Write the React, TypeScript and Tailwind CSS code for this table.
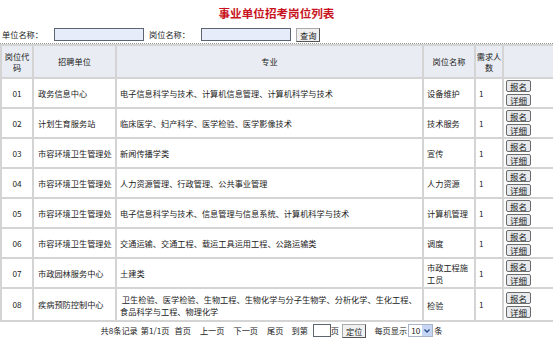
import React from "react";

const rows = [
  { code: "01", unit: "政务信息中心", major: "电子信息科学与技术、计算机信息管理、计算机科学与技术", post: "设备维护" },
  { code: "02", unit: "计划生育服务站", major: "临床医学、妇产科学、医学检验、医学影像技术", post: "技术服务" },
  { code: "03", unit: "市容环境卫生管理处", major: "新闻传播学类", post: "宣传" },
  { code: "04", unit: "市容环境卫生管理处", major: "人力资源管理、行政管理、公共事业管理", post: "人力资源" },
  { code: "05", unit: "市容环境卫生管理处", major: "电子信息科学与技术、信息管理与信息系统、计算机科学与技术", post: "计算机管理" },
  { code: "06", unit: "市容环境卫生管理处", major: "交通运输、交通工程、载运工具运用工程、公路运输类", post: "调度" },
  { code: "07", unit: "市政园林服务中心", major: "土建类", post: "市政工程施工员" },
  { code: "08", unit: "疾病预防控制中心", major: "\u00a0卫生检验、医学检验、生物工程、生物化学与分子生物学、分析化学、生化工程、食品科学与工程、物理化学", post: "检验" },
];

const SmallButton = ({ label }: { label: string }) => (
  <button className="block w-[25px] h-[12px] leading-[10px] border border-[#6b6b6b] rounded-[2px] bg-[#e8eaee] text-[8.5px] text-[#222]">
    {label}
  </button>
);

export default function App() {
  return (
    <div className="w-[553px] h-[348px] bg-white text-[#222] text-[8.2px] overflow-hidden" style={{ fontFamily: '"Noto Sans CJK SC", sans-serif' }}>
      {/* title */}
      <div className="h-[26px] flex items-center justify-center pt-[2px]">
        <h1 className="text-[11.6px] font-bold text-[#c8141e]">事业单位招考岗位列表</h1>
      </div>

      {/* search */}
      <div className="flex items-center h-[17px] pl-[2px]">
        <span className="w-[52px]">单位名称：</span>
        <input className="w-[90px] h-[13px] bg-[#e6ecfa] border border-[#5c6670]" />
        <span className="ml-[5px] w-[52px]">岗位名称：</span>
        <input className="w-[90px] h-[13px] bg-[#e6ecfa] border border-[#5c6670]" />
        <button className="ml-[5px] h-[14px] px-[3px] leading-[12px] bg-[#f0f0f0] border border-[#aaa] border-r-[#555] border-b-[#555]">查询</button>
      </div>
      <div className="border-b border-dotted border-[#999]" />

      {/* table */}
      <table className="w-[553px] table-fixed border-collapse">
        <colgroup>
          <col className="w-[32px]" />
          <col className="w-[83px]" />
          <col className="w-[307px]" />
          <col className="w-[52px]" />
          <col className="w-[28px]" />
          <col className="w-[51px]" />
        </colgroup>
        <thead>
          <tr className="h-[33px] bg-[#e9ecf3]">
            <th className="font-normal border-2 border-[#d4d4d4] leading-[11px] px-[2px]">岗位代码</th>
            <th className="font-normal border-2 border-[#d4d4d4]">招聘单位</th>
            <th className="font-normal border-2 border-[#d4d4d4]">专业</th>
            <th className="font-normal border-2 border-[#d4d4d4]">岗位名称</th>
            <th className="font-normal border-2 border-[#d4d4d4] leading-[11px]">需求人数</th>
            <th className="font-normal border-2 border-[#d4d4d4]"></th>
          </tr>
        </thead>
        <tbody>
          {rows.map((r, i) => (
            <tr key={r.code} className={i === rows.length - 1 ? "h-[33px]" : "h-[30px]"}>
              <td className="border-2 border-[#d4d4d4] text-center">{r.code}</td>
              <td className="border-2 border-[#d4d4d4] pl-[4px] whitespace-nowrap">{r.unit}</td>
              <td className="border-2 border-[#d4d4d4] pl-[3px] leading-[12px]">{r.major}</td>
              <td className="border-2 border-[#d4d4d4] pl-[3px] leading-[12px]">{r.post}</td>
              <td className="border-2 border-[#d4d4d4] pl-[3px]">1</td>
              <td className="border-2 border-[#d4d4d4] pl-[2px]">
                <div className="flex flex-col gap-[2px]">
                  <SmallButton label="报名" />
                  <SmallButton label="详细" />
                </div>
              </td>
            </tr>
          ))}
        </tbody>
      </table>

      {/* pager */}
      <div className="flex items-center justify-center h-[17px] pr-[10px]">
        <span>共8条记录</span>
        <span className="ml-[3px]">第1/1页</span>
        <span className="ml-[5px]">首页</span>
        <span className="ml-[9px]">上一页</span>
        <span className="ml-[9px]">下一页</span>
        <span className="ml-[9px]">尾页</span>
        <span className="ml-[8px]">到第</span>
        <input className="ml-[5px] w-[18px] h-[13px] border border-[#5c6670] bg-white" />
        <span>页</span>
        <button className="ml-[3px] h-[14px] px-[3px] leading-[12px] bg-[#f0f0f0] border border-[#aaa] border-r-[#555] border-b-[#555]">定位</button>
        <span className="ml-[8px]">每页显示</span>
        <div className="ml-[1px] flex items-center h-[13px] border border-[#aab4c8] bg-white">
          <span className="px-[2px]">10</span>
          <span className="w-[10px] h-[11px] bg-[#c6d6f4] flex items-center justify-center">
            <svg width="6" height="4" viewBox="0 0 6 4"><path d="M0.5 0.5 L3 3 L5.5 0.5" stroke="#2b4a8a" strokeWidth="1.3" fill="none" /></svg>
          </span>
        </div>
        <span className="ml-[1px]">条</span>
      </div>
    </div>
  );
}
